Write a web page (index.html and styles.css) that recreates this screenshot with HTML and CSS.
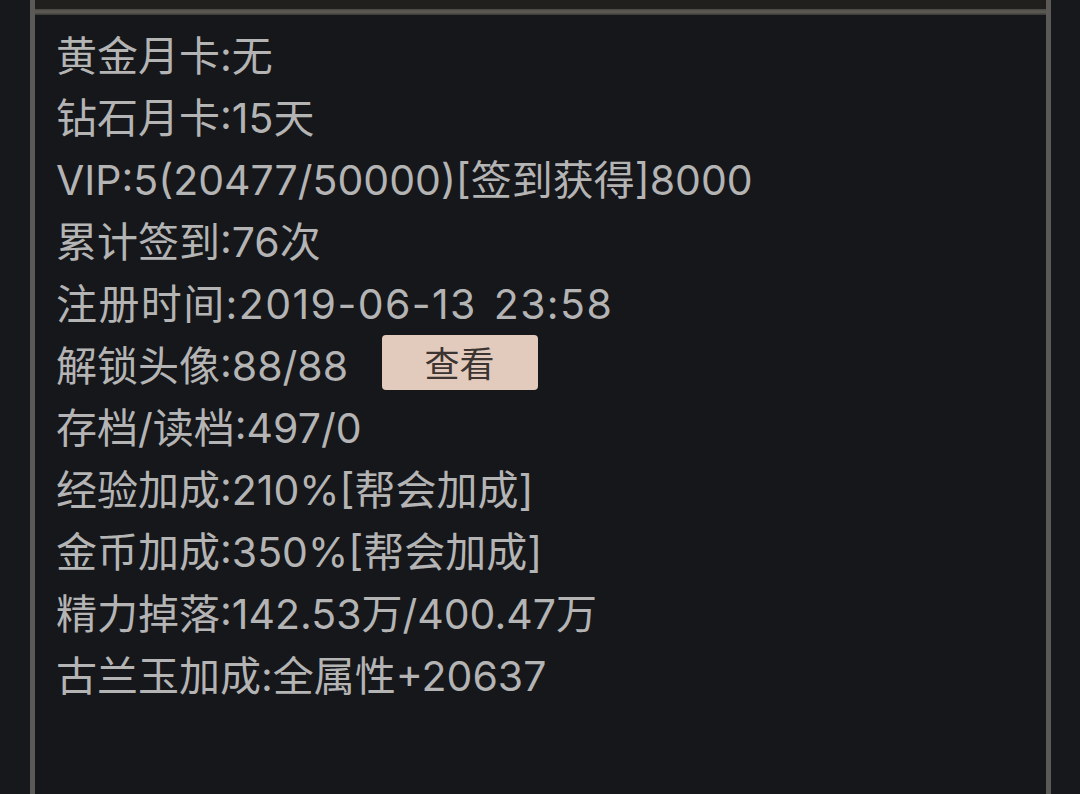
FILE: index.html
```html
<!DOCTYPE html>
<html lang="zh">
<head>
<meta charset="utf-8">
<link rel="stylesheet" href="styles.css">
</head>
<body>
<div class="panel">
  <div class="top-band"></div>
  <div class="top-line"></div>
  <div class="content">
    <div class="row">黄金月卡:无</div>
    <div class="row">钻石月卡:15天</div>
    <div class="row">VIP:5(20477/50000)[签到获得]8000</div>
    <div class="row">累计签到:76次</div>
    <div class="row wide">注册时间:2019-06-13 23:58</div>
    <div class="row">解锁头像:88/88 <span class="btn">查看</span></div>
    <div class="row">存档/读档:497/0</div>
    <div class="row">经验加成:210%[帮会加成]</div>
    <div class="row">金币加成:350%[帮会加成]</div>
    <div class="row">精力掉落:142.53万/400.47万</div>
    <div class="row">古兰玉加成:全属性+20637</div>
  </div>
</div>
</body>
</html>
```
FILE: styles.css
```css
html, body {
  margin: 0;
  padding: 0;
  background: #17181c;
  height: 794px;
  overflow: hidden;
}
.panel {
  margin-left: 30px;
  width: 1011px;
  height: 794px;
  border-left: 5px solid #5c5a57;
  border-right: 5px solid #5c5a57;
  background: #16171b;
}
.top-band {
  height: 9px;
  background: #211f1d;
}
.top-line {
  height: 6px;
  background: linear-gradient(#4a4844, #5f5c57 50%, #3a3936);
}
.content {
  padding: 10px 0 0 21px;
  font-family: Inter, "Noto Sans CJK SC", sans-serif;
  font-size: 41px;
  line-height: 62px;
  color: #b4b4b4;
}
.row {
  display: flex;
  align-items: center;
  height: 62px;
  white-space: pre;
}
.wide {
  word-spacing: 4px;
  letter-spacing: 1.4px;
}
.btn {
  margin-left: 22px;
  margin-bottom: 8px;
  width: 156px;
  height: 55px;
  box-sizing: border-box;
  display: flex;
  align-items: center;
  justify-content: center;
  background: #e2cbbd;
  border-radius: 4px;
  color: #3b3431;
  font-size: 35px;
  font-family: "Noto Sans CJK SC", sans-serif;
}
```
